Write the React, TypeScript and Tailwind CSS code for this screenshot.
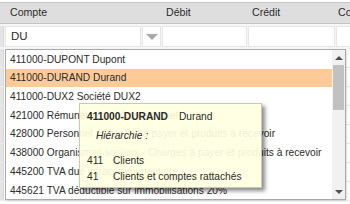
import type { ReactNode } from 'react';

const accounts = [
  '411000-DUPONT Dupont',
  '411000-DURAND Durand',
  '411000-DUX2 Société DUX2',
  '421000 Rémunérations du personnel',
  '428000 Personnel - Charges à payer et produits à recevoir',
  '438000 Organismes sociaux - Charges à payer et produits à recevoir',
  '445200 TVA due intracommunautaire',
  '445621 TVA déductible sur immobilisations 20%',
];

function FilterCell({ className, children }: { className: string; children?: ReactNode }) {
  return (
    <div className={`h-full shrink-0 border border-[#e6e6e6] bg-white ${className}`}>
      {children}
    </div>
  );
}

export default function App() {
  return (
    <div
      className="relative h-[204px] w-[350px] overflow-hidden bg-white text-[#2b2b2b]"
      style={{ fontFamily: '"Liberation Sans", Arial, sans-serif' }}
    >
      {/* Column headers */}
      <div className="mt-[2px] flex h-[22px] items-center whitespace-nowrap border-[#c4c4c4] border-y bg-[#dedede] text-[10.6px]">
        <div className="w-[160px] shrink-0 pl-[10px]">Compte</div>
        <div className="w-[86px] shrink-0 pl-[6px]">Débit</div>
        <div className="w-[88px] shrink-0 pl-[6px]">Crédit</div>
        <div className="shrink-0 pl-[4px]">Commentaire</div>
      </div>

      {/* Filter row */}
      <div className="flex h-[25px] items-center gap-[1px] bg-[#f6f6f6] py-[2px]">
        <div className="h-full w-[4px] shrink-0 border-[#d8d8d8] border-r bg-[#e4e4e4]" />
        <FilterCell className="flex w-[136px] items-center pl-[5px] text-[11.5px]">DU</FilterCell>
        <FilterCell className="flex w-[19px] items-center justify-center">
          <span className="h-0 w-0 border-x-[6px] border-x-transparent border-t-[6px] border-t-[#a8a8a8]" />
        </FilterCell>
        <FilterCell className="w-[85px]" />
        <FilterCell className="w-[87px]" />
        <FilterCell className="w-[40px]" />
      </div>

      {/* Grid body behind the dropdown */}
      <div className="flex flex-col">
        {Array.from({ length: 8 }, (_, i) => (
          <div className="flex h-[19px] border-[#ececec] border-b" key={i}>
            <div className="w-[4px] border-[#d8d8d8] border-r bg-[#e4e4e4]" />
            <div className="flex-1" />
          </div>
        ))}
      </div>

      {/* Dropdown list */}
      <div className="absolute top-[49px] left-[5px] flex h-[151px] w-[341px] border border-[#a9a9a9] bg-white shadow-[1px_1px_2px_rgba(0,0,0,0.15)]">
        <div className="flex-1 overflow-hidden text-[10.2px]">
          {accounts.map((label, index) => (
            <div
              className={`flex h-[18.7px] items-center whitespace-nowrap pl-[4px] ${
                index === 1 ? 'bg-[#fecb98]' : ''
              }`}
              key={label}
            >
              {label}
            </div>
          ))}
        </div>
        <div className="flex w-[13px] flex-col bg-[#f1f1f1]">
          <div className="flex h-[15px] items-center justify-center">
            <span className="h-0 w-0 border-x-[4px] border-x-transparent border-b-[4px] border-b-[#505050]" />
          </div>
          <div className="mx-[1px] h-[45px] bg-[#c1c1c1]" />
          <div className="flex-1" />
          <div className="flex h-[15px] items-center justify-center">
            <span className="h-0 w-0 border-x-[4px] border-x-transparent border-t-[4px] border-t-[#505050]" />
          </div>
        </div>
      </div>

      {/* Tooltip */}
      <div className="absolute top-[103px] left-[79px] flex h-[85px] w-[183px] flex-col border border-[#c9c9b4] bg-[#ffffe1]/[0.92] pt-[6px] pl-[7px] text-[10.2px] shadow-[3px_3px_4px_rgba(0,0,0,0.45)]">
        <div className="flex h-[14px] items-center whitespace-nowrap">
          <span className="font-bold">411000-DURAND</span>
          <span className="ml-[11px]">Durand</span>
        </div>
        <div className="mt-[5px] flex h-[14px] items-center pl-[9px] italic">Hiérarchie :</div>
        <div className="mt-[11px] flex h-[14px] items-center whitespace-nowrap">
          <span className="w-[26px]">411</span>
          <span>Clients</span>
        </div>
        <div className="mt-[2px] flex h-[14px] items-center whitespace-nowrap">
          <span className="w-[26px]">41</span>
          <span>Clients et comptes rattachés</span>
        </div>
      </div>
    </div>
  );
}
